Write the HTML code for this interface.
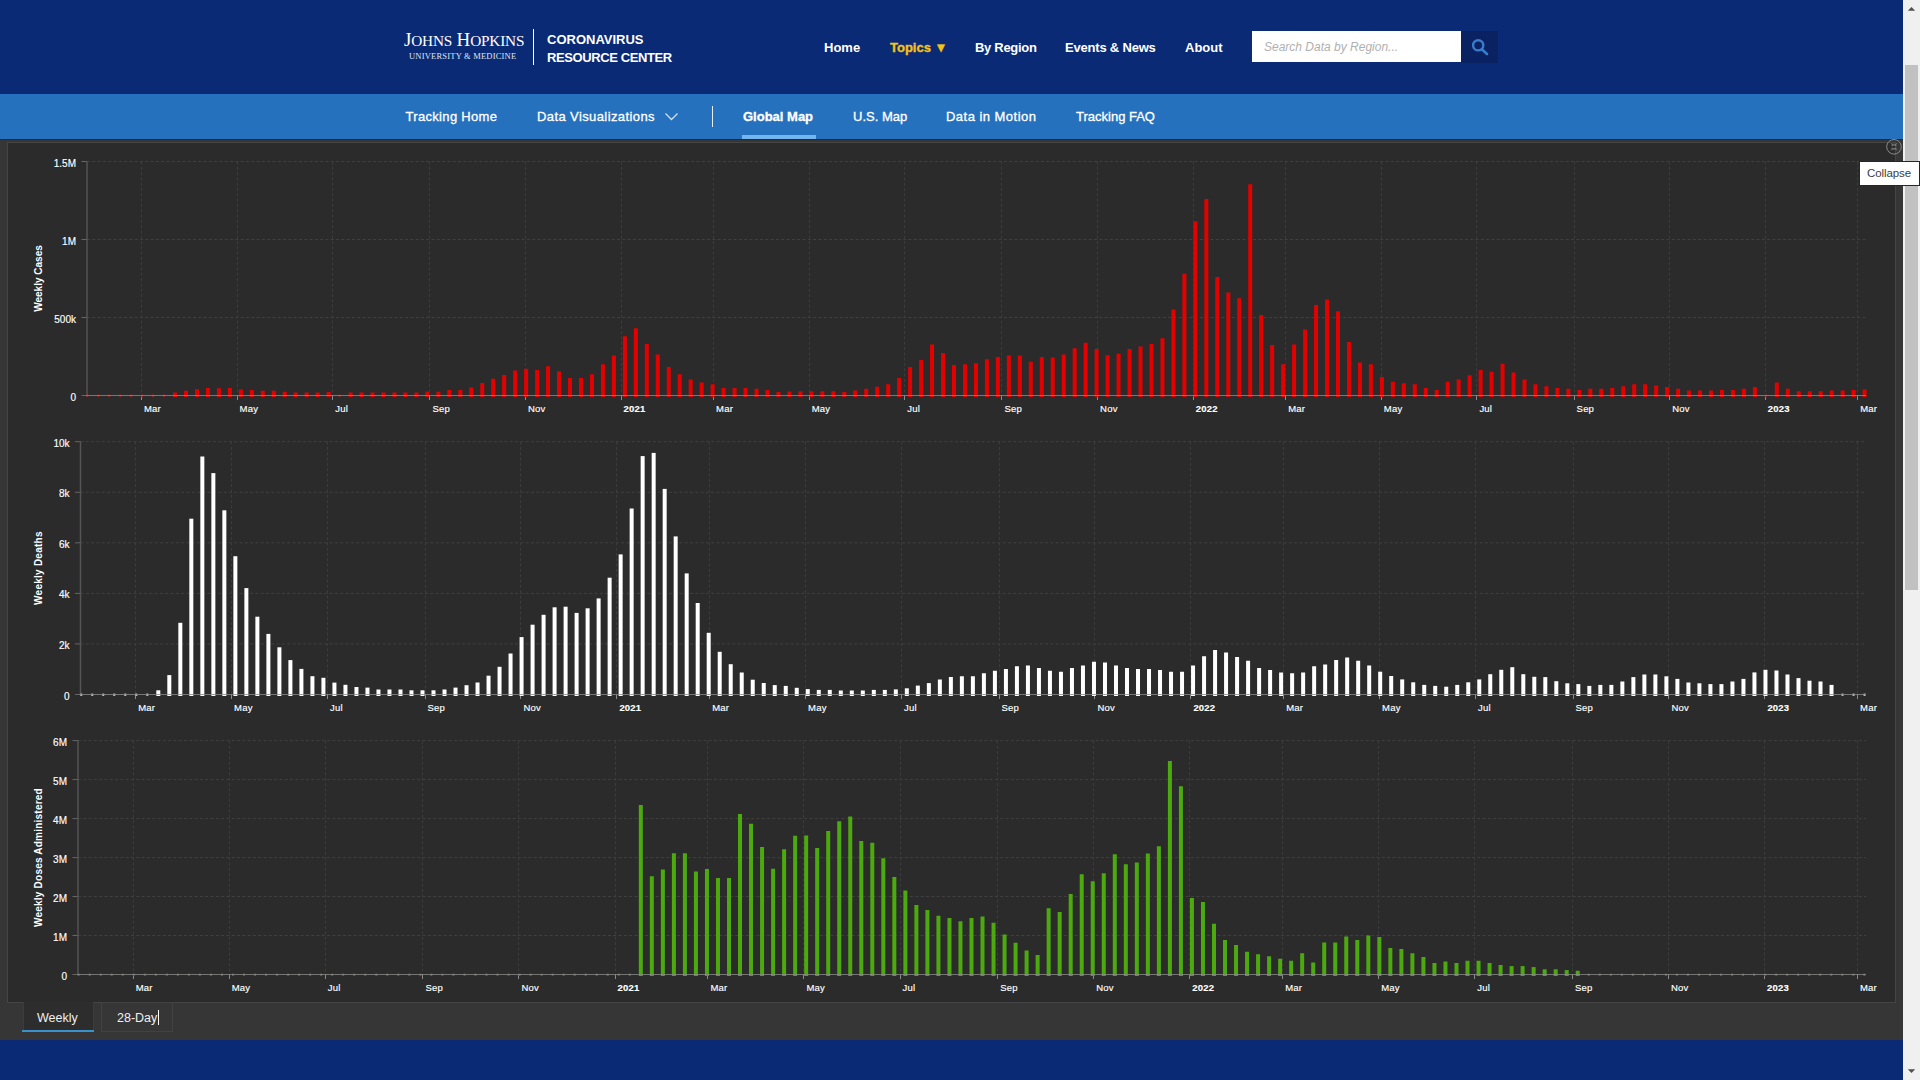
<!DOCTYPE html>
<html><head><meta charset="utf-8">
<style>
*{margin:0;padding:0;box-sizing:border-box}
html,body{width:1920px;height:1080px;overflow:hidden;background:#363636;font-family:"Liberation Sans", sans-serif}
.a{position:absolute;white-space:nowrap;line-height:1}
#hdr{position:absolute;left:0;top:0;width:1903px;height:94px;background:#0b2a75}
#sub{position:absolute;left:0;top:94px;width:1903px;height:45px;background:#2571bd}
#sub2{position:absolute;left:0;top:139px;width:1903px;height:1px;background:#1d2a40}
#outer{position:absolute;left:0;top:140px;width:1903px;height:900px;background:#363636}
#panel{position:absolute;left:7px;top:142px;width:1889px;height:861px;background:#2b2b2b;border:1px solid #454545}
#foot{position:absolute;left:0;top:1040px;width:1903px;height:40px;background:#0b2a75}
.nav{font-size:13px;color:#fff;font-weight:bold}
.snav{font-size:13px;color:#fff;-webkit-text-stroke:0.3px #fff}
svg text{font-family:"Liberation Sans", sans-serif}
.xl{font-size:9.5px;letter-spacing:0.2px;fill:#fff;stroke:#fff;stroke-width:0.15px}
.yl{font-size:10px;fill:#fff;stroke:#fff;stroke-width:0.15px}
.b{font-weight:bold}
.yt{font-size:10px;fill:#fff;font-weight:bold}
#sb{position:absolute;left:1903px;top:0;width:17px;height:1080px;background:#f0f0f0}
#thumb{position:absolute;left:1905px;top:65px;width:13px;height:525px;background:#c1c1c1}
</style></head><body>
<div id="hdr"></div>
<div id="sub"></div>
<div id="sub2"></div>
<div id="outer"></div>
<div id="panel"></div>
<div id="foot"></div>

<!-- logo -->
<div class="a" style="left:404px;top:30px;font-family:'Liberation Serif',serif;font-size:19px;color:#fff;letter-spacing:-0.2px">J<span style="font-size:15.3px">OHNS</span> H<span style="font-size:15.3px">OPKINS</span></div>
<div class="a" style="left:409px;top:52px;font-family:'Liberation Serif',serif;font-size:8.5px;color:#dfe6f2;letter-spacing:0.2px">UNIVERSITY &amp; MEDICINE</div>
<div class="a" style="left:533px;top:29px;width:1px;height:36px;background:#fff"></div>
<div class="a" style="left:547px;top:32.5px;font-size:13px;font-weight:bold;color:#fff;letter-spacing:0px">CORONAVIRUS</div>
<div class="a" style="left:547px;top:50.5px;font-size:13px;font-weight:bold;color:#fff;letter-spacing:-0.4px">RESOURCE CENTER</div>

<!-- nav -->
<div class="a nav" style="left:824px;top:40.5px">Home</div>
<div class="a nav" style="left:890px;top:40.5px;color:#f2c416;-webkit-text-stroke:0.35px #f2c416">Topics &#9660;</div>
<div class="a nav" style="left:975px;top:40.5px;letter-spacing:-0.3px">By Region</div>
<div class="a nav" style="left:1065px;top:40.5px;letter-spacing:-0.2px">Events &amp; News</div>
<div class="a nav" style="left:1185px;top:40.5px">About</div>

<div class="a" style="left:1252px;top:31px;width:209px;height:31px;background:#fff"></div>
<div class="a" style="left:1264px;top:40.5px;font-size:12px;font-style:italic;color:#b0b0b0">Search Data by Region...</div>
<div class="a" style="left:1461px;top:31px;width:37px;height:32px;background:#0a2262"></div>
<svg class="a" style="left:1461px;top:31px" width="37" height="32" viewBox="0 0 37 32"><circle cx="17.2" cy="14.3" r="5.1" fill="none" stroke="#3a7ccc" stroke-width="2.4"/><line x1="20.8" y1="18.2" x2="26" y2="23" stroke="#3a7ccc" stroke-width="2.6" stroke-linecap="round"/></svg>

<!-- subnav -->
<div class="a snav" style="left:405.5px;top:110px;letter-spacing:0.32px">Tracking Home</div>
<div class="a snav" style="left:537px;top:110px;letter-spacing:0.4px">Data Visualizations</div>
<svg class="a" style="left:664px;top:111px" width="15" height="10" viewBox="0 0 15 10"><polyline points="1.5,2.5 7.5,8.5 13.5,2.5" fill="none" stroke="#cfe0f5" stroke-width="1.3"/></svg>
<div class="a" style="left:711.5px;top:106px;width:1.3px;height:21px;background:#e8eef8"></div>
<div class="a snav" style="left:743px;top:110px;font-weight:bold">Global Map</div>
<div class="a" style="left:742px;top:135px;width:74px;height:4px;background:#72b6f0"></div>
<div class="a snav" style="left:853px;top:110px">U.S. Map</div>
<div class="a snav" style="left:946px;top:110px;letter-spacing:0.47px">Data in Motion</div>
<div class="a snav" style="left:1076px;top:110px">Tracking FAQ</div>

<svg class="a" style="left:0;top:0" width="1920" height="1080" viewBox="0 0 1920 1080">
<line x1="81.5" y1="395.5" x2="87" y2="395.5" stroke="#666"/>
<text x="76" y="400.5" text-anchor="end" class="yl">0</text>
<line x1="87" y1="317.5" x2="1866" y2="317.5" stroke="#404040" stroke-dasharray="3 2.3"/>
<line x1="81.5" y1="317.5" x2="87" y2="317.5" stroke="#666"/>
<text x="76" y="322.5" text-anchor="end" class="yl">500k</text>
<line x1="87" y1="239.5" x2="1866" y2="239.5" stroke="#404040" stroke-dasharray="3 2.3"/>
<line x1="81.5" y1="239.5" x2="87" y2="239.5" stroke="#666"/>
<text x="76" y="244.5" text-anchor="end" class="yl">1M</text>
<line x1="87" y1="161.5" x2="1866" y2="161.5" stroke="#404040" stroke-dasharray="3 2.3"/>
<line x1="81.5" y1="161.5" x2="87" y2="161.5" stroke="#666"/>
<text x="76" y="166.5" text-anchor="end" class="yl">1.5M</text>
<line x1="141.5" y1="161.5" x2="141.5" y2="395.5" stroke="#3c3c3c" stroke-dasharray="3 2.3"/>
<line x1="141.5" y1="395.5" x2="141.5" y2="400.0" stroke="#8a8a8a"/>
<text x="144.0" y="412.1" class="xl">Mar</text>
<line x1="237.5" y1="161.5" x2="237.5" y2="395.5" stroke="#3c3c3c" stroke-dasharray="3 2.3"/>
<line x1="237.5" y1="395.5" x2="237.5" y2="400.0" stroke="#8a8a8a"/>
<text x="239.6" y="412.1" class="xl">May</text>
<line x1="332.5" y1="161.5" x2="332.5" y2="395.5" stroke="#3c3c3c" stroke-dasharray="3 2.3"/>
<line x1="332.5" y1="395.5" x2="332.5" y2="400.0" stroke="#8a8a8a"/>
<text x="335.3" y="412.1" class="xl">Jul</text>
<line x1="429.5" y1="161.5" x2="429.5" y2="395.5" stroke="#3c3c3c" stroke-dasharray="3 2.3"/>
<line x1="429.5" y1="395.5" x2="429.5" y2="400.0" stroke="#8a8a8a"/>
<text x="432.4" y="412.1" class="xl">Sep</text>
<line x1="525.5" y1="161.5" x2="525.5" y2="395.5" stroke="#3c3c3c" stroke-dasharray="3 2.3"/>
<line x1="525.5" y1="395.5" x2="525.5" y2="400.0" stroke="#8a8a8a"/>
<text x="528.0" y="412.1" class="xl">Nov</text>
<line x1="621.5" y1="161.5" x2="621.5" y2="395.5" stroke="#3c3c3c" stroke-dasharray="3 2.3"/>
<line x1="621.5" y1="395.5" x2="621.5" y2="400.0" stroke="#8a8a8a"/>
<text x="623.6" y="412.1" class="xl b">2021</text>
<line x1="713.5" y1="161.5" x2="713.5" y2="395.5" stroke="#3c3c3c" stroke-dasharray="3 2.3"/>
<line x1="713.5" y1="395.5" x2="713.5" y2="400.0" stroke="#8a8a8a"/>
<text x="716.1" y="412.1" class="xl">Mar</text>
<line x1="809.5" y1="161.5" x2="809.5" y2="395.5" stroke="#3c3c3c" stroke-dasharray="3 2.3"/>
<line x1="809.5" y1="395.5" x2="809.5" y2="400.0" stroke="#8a8a8a"/>
<text x="811.7" y="412.1" class="xl">May</text>
<line x1="904.5" y1="161.5" x2="904.5" y2="395.5" stroke="#3c3c3c" stroke-dasharray="3 2.3"/>
<line x1="904.5" y1="395.5" x2="904.5" y2="400.0" stroke="#8a8a8a"/>
<text x="907.3" y="412.1" class="xl">Jul</text>
<line x1="1001.5" y1="161.5" x2="1001.5" y2="395.5" stroke="#3c3c3c" stroke-dasharray="3 2.3"/>
<line x1="1001.5" y1="395.5" x2="1001.5" y2="400.0" stroke="#8a8a8a"/>
<text x="1004.5" y="412.1" class="xl">Sep</text>
<line x1="1097.5" y1="161.5" x2="1097.5" y2="395.5" stroke="#3c3c3c" stroke-dasharray="3 2.3"/>
<line x1="1097.5" y1="395.5" x2="1097.5" y2="400.0" stroke="#8a8a8a"/>
<text x="1100.1" y="412.1" class="xl">Nov</text>
<line x1="1193.5" y1="161.5" x2="1193.5" y2="395.5" stroke="#3c3c3c" stroke-dasharray="3 2.3"/>
<line x1="1193.5" y1="395.5" x2="1193.5" y2="400.0" stroke="#8a8a8a"/>
<text x="1195.7" y="412.1" class="xl b">2022</text>
<line x1="1285.5" y1="161.5" x2="1285.5" y2="395.5" stroke="#3c3c3c" stroke-dasharray="3 2.3"/>
<line x1="1285.5" y1="395.5" x2="1285.5" y2="400.0" stroke="#8a8a8a"/>
<text x="1288.2" y="412.1" class="xl">Mar</text>
<line x1="1381.5" y1="161.5" x2="1381.5" y2="395.5" stroke="#3c3c3c" stroke-dasharray="3 2.3"/>
<line x1="1381.5" y1="395.5" x2="1381.5" y2="400.0" stroke="#8a8a8a"/>
<text x="1383.8" y="412.1" class="xl">May</text>
<line x1="1476.5" y1="161.5" x2="1476.5" y2="395.5" stroke="#3c3c3c" stroke-dasharray="3 2.3"/>
<line x1="1476.5" y1="395.5" x2="1476.5" y2="400.0" stroke="#8a8a8a"/>
<text x="1479.4" y="412.1" class="xl">Jul</text>
<line x1="1574.5" y1="161.5" x2="1574.5" y2="395.5" stroke="#3c3c3c" stroke-dasharray="3 2.3"/>
<line x1="1574.5" y1="395.5" x2="1574.5" y2="400.0" stroke="#8a8a8a"/>
<text x="1576.6" y="412.1" class="xl">Sep</text>
<line x1="1669.5" y1="161.5" x2="1669.5" y2="395.5" stroke="#3c3c3c" stroke-dasharray="3 2.3"/>
<line x1="1669.5" y1="395.5" x2="1669.5" y2="400.0" stroke="#8a8a8a"/>
<text x="1672.2" y="412.1" class="xl">Nov</text>
<line x1="1765.5" y1="161.5" x2="1765.5" y2="395.5" stroke="#3c3c3c" stroke-dasharray="3 2.3"/>
<line x1="1765.5" y1="395.5" x2="1765.5" y2="400.0" stroke="#8a8a8a"/>
<text x="1767.8" y="412.1" class="xl b">2023</text>
<line x1="1857.5" y1="161.5" x2="1857.5" y2="395.5" stroke="#3c3c3c" stroke-dasharray="3 2.3"/>
<line x1="1857.5" y1="395.5" x2="1857.5" y2="400.0" stroke="#8a8a8a"/>
<text x="1860.2" y="412.1" class="xl">Mar</text>
<line x1="87" y1="161.0" x2="87" y2="395.5" stroke="#555" stroke-width="1.5"/>
<rect x="86.28" y="394.5" width="2" height="2.5" fill="#a02020"/>
<rect x="97.26" y="394.5" width="2" height="2.5" fill="#a02020"/>
<rect x="108.23" y="394.5" width="2" height="2.5" fill="#a02020"/>
<rect x="119.20" y="394.5" width="2" height="2.5" fill="#a02020"/>
<rect x="130.17" y="394.5" width="2" height="2.5" fill="#a02020"/>
<rect x="141.14" y="394.5" width="2" height="2.5" fill="#a02020"/>
<rect x="152.11" y="394.5" width="2" height="2.5" fill="#a02020"/>
<rect x="163.08" y="394.5" width="2" height="2.5" fill="#a02020"/>
<rect x="173.05" y="392.50" width="4.0" height="4.50" fill="#e50000"/>
<rect x="184.02" y="390.75" width="4.0" height="6.25" fill="#e50000"/>
<rect x="195.00" y="389.25" width="4.0" height="7.75" fill="#e50000"/>
<rect x="205.97" y="388.00" width="4.0" height="9.00" fill="#e50000"/>
<rect x="216.94" y="388.25" width="4.0" height="8.75" fill="#e50000"/>
<rect x="227.91" y="388.00" width="4.0" height="9.00" fill="#e50000"/>
<rect x="238.88" y="389.50" width="4.0" height="7.50" fill="#e50000"/>
<rect x="249.85" y="390.00" width="4.0" height="7.00" fill="#e50000"/>
<rect x="260.82" y="390.75" width="4.0" height="6.25" fill="#e50000"/>
<rect x="271.79" y="390.75" width="4.0" height="6.25" fill="#e50000"/>
<rect x="282.77" y="391.75" width="4.0" height="5.25" fill="#e50000"/>
<rect x="293.74" y="392.50" width="4.0" height="4.50" fill="#e50000"/>
<rect x="304.71" y="392.50" width="4.0" height="4.50" fill="#e50000"/>
<rect x="315.68" y="392.50" width="4.0" height="4.50" fill="#e50000"/>
<rect x="326.65" y="392.00" width="4.0" height="5.00" fill="#e50000"/>
<rect x="338.62" y="394.5" width="2" height="2.5" fill="#a02020"/>
<rect x="348.59" y="392.50" width="4.0" height="4.50" fill="#e50000"/>
<rect x="359.56" y="392.50" width="4.0" height="4.50" fill="#e50000"/>
<rect x="370.53" y="392.50" width="4.0" height="4.50" fill="#e50000"/>
<rect x="381.51" y="392.50" width="4.0" height="4.50" fill="#e50000"/>
<rect x="392.48" y="392.50" width="4.0" height="4.50" fill="#e50000"/>
<rect x="403.45" y="392.50" width="4.0" height="4.50" fill="#e50000"/>
<rect x="414.42" y="392.50" width="4.0" height="4.50" fill="#e50000"/>
<rect x="425.39" y="391.50" width="4.0" height="5.50" fill="#e50000"/>
<rect x="436.36" y="391.75" width="4.0" height="5.25" fill="#e50000"/>
<rect x="447.33" y="390.00" width="4.0" height="7.00" fill="#e50000"/>
<rect x="458.30" y="390.00" width="4.0" height="7.00" fill="#e50000"/>
<rect x="469.28" y="387.50" width="4.0" height="9.50" fill="#e50000"/>
<rect x="480.25" y="383.00" width="4.0" height="14.00" fill="#e50000"/>
<rect x="491.22" y="378.75" width="4.0" height="18.25" fill="#e50000"/>
<rect x="502.19" y="375.00" width="4.0" height="22.00" fill="#e50000"/>
<rect x="513.16" y="370.50" width="4.0" height="26.50" fill="#e50000"/>
<rect x="524.13" y="368.75" width="4.0" height="28.25" fill="#e50000"/>
<rect x="535.10" y="370.00" width="4.0" height="27.00" fill="#e50000"/>
<rect x="546.07" y="366.25" width="4.0" height="30.75" fill="#e50000"/>
<rect x="557.04" y="371.25" width="4.0" height="25.75" fill="#e50000"/>
<rect x="568.02" y="378.00" width="4.0" height="19.00" fill="#e50000"/>
<rect x="578.99" y="378.00" width="4.0" height="19.00" fill="#e50000"/>
<rect x="589.96" y="374.25" width="4.0" height="22.75" fill="#e50000"/>
<rect x="600.93" y="364.25" width="4.0" height="32.75" fill="#e50000"/>
<rect x="611.90" y="355.50" width="4.0" height="41.50" fill="#e50000"/>
<rect x="622.87" y="336.25" width="4.0" height="60.75" fill="#e50000"/>
<rect x="633.84" y="328.25" width="4.0" height="68.75" fill="#e50000"/>
<rect x="644.81" y="344.00" width="4.0" height="53.00" fill="#e50000"/>
<rect x="655.78" y="354.50" width="4.0" height="42.50" fill="#e50000"/>
<rect x="666.76" y="367.00" width="4.0" height="30.00" fill="#e50000"/>
<rect x="677.73" y="374.25" width="4.0" height="22.75" fill="#e50000"/>
<rect x="688.70" y="379.50" width="4.0" height="17.50" fill="#e50000"/>
<rect x="699.67" y="382.50" width="4.0" height="14.50" fill="#e50000"/>
<rect x="710.64" y="384.25" width="4.0" height="12.75" fill="#e50000"/>
<rect x="721.61" y="388.00" width="4.0" height="9.00" fill="#e50000"/>
<rect x="732.58" y="388.00" width="4.0" height="9.00" fill="#e50000"/>
<rect x="743.55" y="388.00" width="4.0" height="9.00" fill="#e50000"/>
<rect x="754.53" y="388.75" width="4.0" height="8.25" fill="#e50000"/>
<rect x="765.50" y="390.00" width="4.0" height="7.00" fill="#e50000"/>
<rect x="776.47" y="392.00" width="4.0" height="5.00" fill="#e50000"/>
<rect x="787.44" y="391.50" width="4.0" height="5.50" fill="#e50000"/>
<rect x="798.41" y="391.25" width="4.0" height="5.75" fill="#e50000"/>
<rect x="809.38" y="391.25" width="4.0" height="5.75" fill="#e50000"/>
<rect x="820.35" y="391.25" width="4.0" height="5.75" fill="#e50000"/>
<rect x="831.32" y="391.25" width="4.0" height="5.75" fill="#e50000"/>
<rect x="842.29" y="392.00" width="4.0" height="5.00" fill="#e50000"/>
<rect x="853.27" y="390.50" width="4.0" height="6.50" fill="#e50000"/>
<rect x="864.24" y="388.75" width="4.0" height="8.25" fill="#e50000"/>
<rect x="875.21" y="386.75" width="4.0" height="10.25" fill="#e50000"/>
<rect x="886.18" y="384.25" width="4.0" height="12.75" fill="#e50000"/>
<rect x="897.15" y="378.00" width="4.0" height="19.00" fill="#e50000"/>
<rect x="908.12" y="367.00" width="4.0" height="30.00" fill="#e50000"/>
<rect x="919.09" y="360.00" width="4.0" height="37.00" fill="#e50000"/>
<rect x="930.06" y="344.50" width="4.0" height="52.50" fill="#e50000"/>
<rect x="941.04" y="353.00" width="4.0" height="44.00" fill="#e50000"/>
<rect x="952.01" y="365.00" width="4.0" height="32.00" fill="#e50000"/>
<rect x="962.98" y="364.25" width="4.0" height="32.75" fill="#e50000"/>
<rect x="973.95" y="363.25" width="4.0" height="33.75" fill="#e50000"/>
<rect x="984.92" y="359.25" width="4.0" height="37.75" fill="#e50000"/>
<rect x="995.89" y="357.00" width="4.0" height="40.00" fill="#e50000"/>
<rect x="1006.86" y="355.50" width="4.0" height="41.50" fill="#e50000"/>
<rect x="1017.83" y="355.50" width="4.0" height="41.50" fill="#e50000"/>
<rect x="1028.80" y="361.75" width="4.0" height="35.25" fill="#e50000"/>
<rect x="1039.78" y="357.00" width="4.0" height="40.00" fill="#e50000"/>
<rect x="1050.75" y="357.50" width="4.0" height="39.50" fill="#e50000"/>
<rect x="1061.72" y="354.50" width="4.0" height="42.50" fill="#e50000"/>
<rect x="1072.69" y="348.25" width="4.0" height="48.75" fill="#e50000"/>
<rect x="1083.66" y="342.75" width="4.0" height="54.25" fill="#e50000"/>
<rect x="1094.63" y="349.00" width="4.0" height="48.00" fill="#e50000"/>
<rect x="1105.60" y="355.25" width="4.0" height="41.75" fill="#e50000"/>
<rect x="1116.57" y="353.75" width="4.0" height="43.25" fill="#e50000"/>
<rect x="1127.55" y="349.00" width="4.0" height="48.00" fill="#e50000"/>
<rect x="1138.52" y="346.50" width="4.0" height="50.50" fill="#e50000"/>
<rect x="1149.49" y="344.00" width="4.0" height="53.00" fill="#e50000"/>
<rect x="1160.46" y="338.25" width="4.0" height="58.75" fill="#e50000"/>
<rect x="1171.43" y="309.50" width="4.0" height="87.50" fill="#e50000"/>
<rect x="1182.40" y="273.75" width="4.0" height="123.25" fill="#e50000"/>
<rect x="1193.37" y="221.25" width="4.0" height="175.75" fill="#e50000"/>
<rect x="1204.34" y="199.00" width="4.0" height="198.00" fill="#e50000"/>
<rect x="1215.31" y="277.00" width="4.0" height="120.00" fill="#e50000"/>
<rect x="1226.29" y="292.50" width="4.0" height="104.50" fill="#e50000"/>
<rect x="1237.26" y="298.25" width="4.0" height="98.75" fill="#e50000"/>
<rect x="1248.23" y="184.25" width="4.0" height="212.75" fill="#e50000"/>
<rect x="1259.20" y="315.00" width="4.0" height="82.00" fill="#e50000"/>
<rect x="1270.17" y="345.00" width="4.0" height="52.00" fill="#e50000"/>
<rect x="1281.14" y="364.25" width="4.0" height="32.75" fill="#e50000"/>
<rect x="1292.11" y="344.50" width="4.0" height="52.50" fill="#e50000"/>
<rect x="1303.08" y="329.50" width="4.0" height="67.50" fill="#e50000"/>
<rect x="1314.06" y="305.00" width="4.0" height="92.00" fill="#e50000"/>
<rect x="1325.03" y="299.50" width="4.0" height="97.50" fill="#e50000"/>
<rect x="1336.00" y="311.25" width="4.0" height="85.75" fill="#e50000"/>
<rect x="1346.97" y="342.00" width="4.0" height="55.00" fill="#e50000"/>
<rect x="1357.94" y="362.50" width="4.0" height="34.50" fill="#e50000"/>
<rect x="1368.91" y="364.25" width="4.0" height="32.75" fill="#e50000"/>
<rect x="1379.88" y="377.00" width="4.0" height="20.00" fill="#e50000"/>
<rect x="1390.85" y="381.75" width="4.0" height="15.25" fill="#e50000"/>
<rect x="1401.82" y="383.25" width="4.0" height="13.75" fill="#e50000"/>
<rect x="1412.80" y="384.25" width="4.0" height="12.75" fill="#e50000"/>
<rect x="1423.77" y="388.00" width="4.0" height="9.00" fill="#e50000"/>
<rect x="1434.74" y="390.00" width="4.0" height="7.00" fill="#e50000"/>
<rect x="1445.71" y="381.75" width="4.0" height="15.25" fill="#e50000"/>
<rect x="1456.68" y="379.50" width="4.0" height="17.50" fill="#e50000"/>
<rect x="1467.65" y="375.25" width="4.0" height="21.75" fill="#e50000"/>
<rect x="1478.62" y="370.00" width="4.0" height="27.00" fill="#e50000"/>
<rect x="1489.59" y="371.75" width="4.0" height="25.25" fill="#e50000"/>
<rect x="1500.57" y="363.75" width="4.0" height="33.25" fill="#e50000"/>
<rect x="1511.54" y="372.50" width="4.0" height="24.50" fill="#e50000"/>
<rect x="1522.51" y="379.50" width="4.0" height="17.50" fill="#e50000"/>
<rect x="1533.48" y="384.25" width="4.0" height="12.75" fill="#e50000"/>
<rect x="1544.45" y="386.25" width="4.0" height="10.75" fill="#e50000"/>
<rect x="1555.42" y="388.00" width="4.0" height="9.00" fill="#e50000"/>
<rect x="1566.39" y="388.75" width="4.0" height="8.25" fill="#e50000"/>
<rect x="1577.36" y="390.00" width="4.0" height="7.00" fill="#e50000"/>
<rect x="1588.33" y="388.75" width="4.0" height="8.25" fill="#e50000"/>
<rect x="1599.31" y="388.75" width="4.0" height="8.25" fill="#e50000"/>
<rect x="1610.28" y="388.00" width="4.0" height="9.00" fill="#e50000"/>
<rect x="1621.25" y="386.25" width="4.0" height="10.75" fill="#e50000"/>
<rect x="1632.22" y="384.25" width="4.0" height="12.75" fill="#e50000"/>
<rect x="1643.19" y="384.25" width="4.0" height="12.75" fill="#e50000"/>
<rect x="1654.16" y="385.50" width="4.0" height="11.50" fill="#e50000"/>
<rect x="1665.13" y="387.00" width="4.0" height="10.00" fill="#e50000"/>
<rect x="1676.10" y="388.75" width="4.0" height="8.25" fill="#e50000"/>
<rect x="1687.07" y="390.50" width="4.0" height="6.50" fill="#e50000"/>
<rect x="1698.05" y="390.50" width="4.0" height="6.50" fill="#e50000"/>
<rect x="1709.02" y="390.50" width="4.0" height="6.50" fill="#e50000"/>
<rect x="1719.99" y="390.00" width="4.0" height="7.00" fill="#e50000"/>
<rect x="1730.96" y="390.00" width="4.0" height="7.00" fill="#e50000"/>
<rect x="1741.93" y="388.75" width="4.0" height="8.25" fill="#e50000"/>
<rect x="1752.90" y="387.00" width="4.0" height="10.00" fill="#e50000"/>
<rect x="1764.87" y="394.5" width="2" height="2.5" fill="#a02020"/>
<rect x="1774.84" y="382.50" width="4.0" height="14.50" fill="#e50000"/>
<rect x="1785.82" y="388.75" width="4.0" height="8.25" fill="#e50000"/>
<rect x="1796.79" y="391.25" width="4.0" height="5.75" fill="#e50000"/>
<rect x="1807.76" y="391.25" width="4.0" height="5.75" fill="#e50000"/>
<rect x="1818.73" y="391.25" width="4.0" height="5.75" fill="#e50000"/>
<rect x="1829.70" y="390.50" width="4.0" height="6.50" fill="#e50000"/>
<rect x="1840.67" y="390.50" width="4.0" height="6.50" fill="#e50000"/>
<rect x="1851.64" y="390.00" width="4.0" height="7.00" fill="#e50000"/>
<rect x="1862.61" y="389.50" width="4.0" height="7.50" fill="#e50000"/>
<line x1="86" y1="395.5" x2="1866" y2="395.5" stroke="#8a8a8a" stroke-opacity="0.8"/>
<text transform="translate(42,278.5) rotate(-90)" text-anchor="middle" class="yt">Weekly Cases</text>
<line x1="75.0" y1="694.5" x2="80.5" y2="694.5" stroke="#666"/>
<text x="69.5" y="699.5" text-anchor="end" class="yl">0</text>
<line x1="80.5" y1="643.9" x2="1866" y2="643.9" stroke="#404040" stroke-dasharray="3 2.3"/>
<line x1="75.0" y1="643.9" x2="80.5" y2="643.9" stroke="#666"/>
<text x="69.5" y="648.9" text-anchor="end" class="yl">2k</text>
<line x1="80.5" y1="593.4" x2="1866" y2="593.4" stroke="#404040" stroke-dasharray="3 2.3"/>
<line x1="75.0" y1="593.4" x2="80.5" y2="593.4" stroke="#666"/>
<text x="69.5" y="598.4" text-anchor="end" class="yl">4k</text>
<line x1="80.5" y1="542.8" x2="1866" y2="542.8" stroke="#404040" stroke-dasharray="3 2.3"/>
<line x1="75.0" y1="542.8" x2="80.5" y2="542.8" stroke="#666"/>
<text x="69.5" y="547.8" text-anchor="end" class="yl">6k</text>
<line x1="80.5" y1="492.3" x2="1866" y2="492.3" stroke="#404040" stroke-dasharray="3 2.3"/>
<line x1="75.0" y1="492.3" x2="80.5" y2="492.3" stroke="#666"/>
<text x="69.5" y="497.3" text-anchor="end" class="yl">8k</text>
<line x1="80.5" y1="441.7" x2="1866" y2="441.7" stroke="#404040" stroke-dasharray="3 2.3"/>
<line x1="75.0" y1="441.7" x2="80.5" y2="441.7" stroke="#666"/>
<text x="69.5" y="446.7" text-anchor="end" class="yl">10k</text>
<line x1="135.5" y1="441.7" x2="135.5" y2="694.5" stroke="#3c3c3c" stroke-dasharray="3 2.3"/>
<line x1="135.5" y1="694.5" x2="135.5" y2="699.0" stroke="#8a8a8a"/>
<text x="138.2" y="711.1" class="xl">Mar</text>
<line x1="231.5" y1="441.7" x2="231.5" y2="694.5" stroke="#3c3c3c" stroke-dasharray="3 2.3"/>
<line x1="231.5" y1="694.5" x2="231.5" y2="699.0" stroke="#8a8a8a"/>
<text x="234.1" y="711.1" class="xl">May</text>
<line x1="327.5" y1="441.7" x2="327.5" y2="694.5" stroke="#3c3c3c" stroke-dasharray="3 2.3"/>
<line x1="327.5" y1="694.5" x2="327.5" y2="699.0" stroke="#8a8a8a"/>
<text x="330.0" y="711.1" class="xl">Jul</text>
<line x1="425.5" y1="441.7" x2="425.5" y2="694.5" stroke="#3c3c3c" stroke-dasharray="3 2.3"/>
<line x1="425.5" y1="694.5" x2="425.5" y2="699.0" stroke="#8a8a8a"/>
<text x="427.5" y="711.1" class="xl">Sep</text>
<line x1="520.5" y1="441.7" x2="520.5" y2="694.5" stroke="#3c3c3c" stroke-dasharray="3 2.3"/>
<line x1="520.5" y1="694.5" x2="520.5" y2="699.0" stroke="#8a8a8a"/>
<text x="523.5" y="711.1" class="xl">Nov</text>
<line x1="616.5" y1="441.7" x2="616.5" y2="694.5" stroke="#3c3c3c" stroke-dasharray="3 2.3"/>
<line x1="616.5" y1="694.5" x2="616.5" y2="699.0" stroke="#8a8a8a"/>
<text x="619.4" y="711.1" class="xl b">2021</text>
<line x1="709.5" y1="441.7" x2="709.5" y2="694.5" stroke="#3c3c3c" stroke-dasharray="3 2.3"/>
<line x1="709.5" y1="694.5" x2="709.5" y2="699.0" stroke="#8a8a8a"/>
<text x="712.2" y="711.1" class="xl">Mar</text>
<line x1="805.5" y1="441.7" x2="805.5" y2="694.5" stroke="#3c3c3c" stroke-dasharray="3 2.3"/>
<line x1="805.5" y1="694.5" x2="805.5" y2="699.0" stroke="#8a8a8a"/>
<text x="808.1" y="711.1" class="xl">May</text>
<line x1="901.5" y1="441.7" x2="901.5" y2="694.5" stroke="#3c3c3c" stroke-dasharray="3 2.3"/>
<line x1="901.5" y1="694.5" x2="901.5" y2="699.0" stroke="#8a8a8a"/>
<text x="904.0" y="711.1" class="xl">Jul</text>
<line x1="999.5" y1="441.7" x2="999.5" y2="694.5" stroke="#3c3c3c" stroke-dasharray="3 2.3"/>
<line x1="999.5" y1="694.5" x2="999.5" y2="699.0" stroke="#8a8a8a"/>
<text x="1001.5" y="711.1" class="xl">Sep</text>
<line x1="1094.5" y1="441.7" x2="1094.5" y2="694.5" stroke="#3c3c3c" stroke-dasharray="3 2.3"/>
<line x1="1094.5" y1="694.5" x2="1094.5" y2="699.0" stroke="#8a8a8a"/>
<text x="1097.5" y="711.1" class="xl">Nov</text>
<line x1="1190.5" y1="441.7" x2="1190.5" y2="694.5" stroke="#3c3c3c" stroke-dasharray="3 2.3"/>
<line x1="1190.5" y1="694.5" x2="1190.5" y2="699.0" stroke="#8a8a8a"/>
<text x="1193.4" y="711.1" class="xl b">2022</text>
<line x1="1283.5" y1="441.7" x2="1283.5" y2="694.5" stroke="#3c3c3c" stroke-dasharray="3 2.3"/>
<line x1="1283.5" y1="694.5" x2="1283.5" y2="699.0" stroke="#8a8a8a"/>
<text x="1286.2" y="711.1" class="xl">Mar</text>
<line x1="1379.5" y1="441.7" x2="1379.5" y2="694.5" stroke="#3c3c3c" stroke-dasharray="3 2.3"/>
<line x1="1379.5" y1="694.5" x2="1379.5" y2="699.0" stroke="#8a8a8a"/>
<text x="1382.1" y="711.1" class="xl">May</text>
<line x1="1475.5" y1="441.7" x2="1475.5" y2="694.5" stroke="#3c3c3c" stroke-dasharray="3 2.3"/>
<line x1="1475.5" y1="694.5" x2="1475.5" y2="699.0" stroke="#8a8a8a"/>
<text x="1478.0" y="711.1" class="xl">Jul</text>
<line x1="1573.5" y1="441.7" x2="1573.5" y2="694.5" stroke="#3c3c3c" stroke-dasharray="3 2.3"/>
<line x1="1573.5" y1="694.5" x2="1573.5" y2="699.0" stroke="#8a8a8a"/>
<text x="1575.5" y="711.1" class="xl">Sep</text>
<line x1="1668.5" y1="441.7" x2="1668.5" y2="694.5" stroke="#3c3c3c" stroke-dasharray="3 2.3"/>
<line x1="1668.5" y1="694.5" x2="1668.5" y2="699.0" stroke="#8a8a8a"/>
<text x="1671.4" y="711.1" class="xl">Nov</text>
<line x1="1764.5" y1="441.7" x2="1764.5" y2="694.5" stroke="#3c3c3c" stroke-dasharray="3 2.3"/>
<line x1="1764.5" y1="694.5" x2="1764.5" y2="699.0" stroke="#8a8a8a"/>
<text x="1767.4" y="711.1" class="xl b">2023</text>
<line x1="1857.5" y1="441.7" x2="1857.5" y2="694.5" stroke="#3c3c3c" stroke-dasharray="3 2.3"/>
<line x1="1857.5" y1="694.5" x2="1857.5" y2="699.0" stroke="#8a8a8a"/>
<text x="1860.1" y="711.1" class="xl">Mar</text>
<line x1="80.5" y1="441.2" x2="80.5" y2="694.5" stroke="#555" stroke-width="1.5"/>
<rect x="80.25" y="693.5" width="2" height="2.5" fill="#bbbbbb"/>
<rect x="91.26" y="693.5" width="2" height="2.5" fill="#bbbbbb"/>
<rect x="102.27" y="693.5" width="2" height="2.5" fill="#bbbbbb"/>
<rect x="113.27" y="693.5" width="2" height="2.5" fill="#bbbbbb"/>
<rect x="124.28" y="693.5" width="2" height="2.5" fill="#bbbbbb"/>
<rect x="135.29" y="693.5" width="2" height="2.5" fill="#bbbbbb"/>
<rect x="146.30" y="693.5" width="2" height="2.5" fill="#bbbbbb"/>
<rect x="156.31" y="690.30" width="4.0" height="5.70" fill="#ffffff"/>
<rect x="167.31" y="675.10" width="4.0" height="20.90" fill="#ffffff"/>
<rect x="178.32" y="622.80" width="4.0" height="73.20" fill="#ffffff"/>
<rect x="189.33" y="518.70" width="4.0" height="177.30" fill="#ffffff"/>
<rect x="200.34" y="456.50" width="4.0" height="239.50" fill="#ffffff"/>
<rect x="211.35" y="473.10" width="4.0" height="222.90" fill="#ffffff"/>
<rect x="222.35" y="510.30" width="4.0" height="185.70" fill="#ffffff"/>
<rect x="233.36" y="556.20" width="4.0" height="139.80" fill="#ffffff"/>
<rect x="244.37" y="588.10" width="4.0" height="107.90" fill="#ffffff"/>
<rect x="255.38" y="616.70" width="4.0" height="79.30" fill="#ffffff"/>
<rect x="266.39" y="633.90" width="4.0" height="62.10" fill="#ffffff"/>
<rect x="277.39" y="647.30" width="4.0" height="48.70" fill="#ffffff"/>
<rect x="288.40" y="660.10" width="4.0" height="35.90" fill="#ffffff"/>
<rect x="299.41" y="668.90" width="4.0" height="27.10" fill="#ffffff"/>
<rect x="310.42" y="676.20" width="4.0" height="19.80" fill="#ffffff"/>
<rect x="321.42" y="677.80" width="4.0" height="18.20" fill="#ffffff"/>
<rect x="332.43" y="682.60" width="4.0" height="13.40" fill="#ffffff"/>
<rect x="343.44" y="684.80" width="4.0" height="11.20" fill="#ffffff"/>
<rect x="354.45" y="687.00" width="4.0" height="9.00" fill="#ffffff"/>
<rect x="365.46" y="687.60" width="4.0" height="8.40" fill="#ffffff"/>
<rect x="376.46" y="689.50" width="4.0" height="6.50" fill="#ffffff"/>
<rect x="387.47" y="689.50" width="4.0" height="6.50" fill="#ffffff"/>
<rect x="398.48" y="689.50" width="4.0" height="6.50" fill="#ffffff"/>
<rect x="409.49" y="690.30" width="4.0" height="5.70" fill="#ffffff"/>
<rect x="420.50" y="690.30" width="4.0" height="5.70" fill="#ffffff"/>
<rect x="431.50" y="690.30" width="4.0" height="5.70" fill="#ffffff"/>
<rect x="442.51" y="689.50" width="4.0" height="6.50" fill="#ffffff"/>
<rect x="453.52" y="687.60" width="4.0" height="8.40" fill="#ffffff"/>
<rect x="464.53" y="685.20" width="4.0" height="10.80" fill="#ffffff"/>
<rect x="475.54" y="682.50" width="4.0" height="13.50" fill="#ffffff"/>
<rect x="486.54" y="675.70" width="4.0" height="20.30" fill="#ffffff"/>
<rect x="497.55" y="666.80" width="4.0" height="29.20" fill="#ffffff"/>
<rect x="508.56" y="653.50" width="4.0" height="42.50" fill="#ffffff"/>
<rect x="519.57" y="637.10" width="4.0" height="58.90" fill="#ffffff"/>
<rect x="530.58" y="624.70" width="4.0" height="71.30" fill="#ffffff"/>
<rect x="541.58" y="614.80" width="4.0" height="81.20" fill="#ffffff"/>
<rect x="552.59" y="607.30" width="4.0" height="88.70" fill="#ffffff"/>
<rect x="563.60" y="606.70" width="4.0" height="89.30" fill="#ffffff"/>
<rect x="574.61" y="612.90" width="4.0" height="83.10" fill="#ffffff"/>
<rect x="585.61" y="608.30" width="4.0" height="87.70" fill="#ffffff"/>
<rect x="596.62" y="598.40" width="4.0" height="97.60" fill="#ffffff"/>
<rect x="607.63" y="577.70" width="4.0" height="118.30" fill="#ffffff"/>
<rect x="618.64" y="554.40" width="4.0" height="141.60" fill="#ffffff"/>
<rect x="629.65" y="508.50" width="4.0" height="187.50" fill="#ffffff"/>
<rect x="640.65" y="456.10" width="4.0" height="239.90" fill="#ffffff"/>
<rect x="651.66" y="452.90" width="4.0" height="243.10" fill="#ffffff"/>
<rect x="662.67" y="488.90" width="4.0" height="207.10" fill="#ffffff"/>
<rect x="673.68" y="536.40" width="4.0" height="159.60" fill="#ffffff"/>
<rect x="684.69" y="573.40" width="4.0" height="122.60" fill="#ffffff"/>
<rect x="695.69" y="603.00" width="4.0" height="93.00" fill="#ffffff"/>
<rect x="706.70" y="632.80" width="4.0" height="63.20" fill="#ffffff"/>
<rect x="717.71" y="651.80" width="4.0" height="44.20" fill="#ffffff"/>
<rect x="728.72" y="664.20" width="4.0" height="31.80" fill="#ffffff"/>
<rect x="739.73" y="672.50" width="4.0" height="23.50" fill="#ffffff"/>
<rect x="750.73" y="679.70" width="4.0" height="16.30" fill="#ffffff"/>
<rect x="761.74" y="683.00" width="4.0" height="13.00" fill="#ffffff"/>
<rect x="772.75" y="685.10" width="4.0" height="10.90" fill="#ffffff"/>
<rect x="783.76" y="685.90" width="4.0" height="10.10" fill="#ffffff"/>
<rect x="794.77" y="687.80" width="4.0" height="8.20" fill="#ffffff"/>
<rect x="805.77" y="689.10" width="4.0" height="6.90" fill="#ffffff"/>
<rect x="816.78" y="689.90" width="4.0" height="6.10" fill="#ffffff"/>
<rect x="827.79" y="689.90" width="4.0" height="6.10" fill="#ffffff"/>
<rect x="838.80" y="690.50" width="4.0" height="5.50" fill="#ffffff"/>
<rect x="849.80" y="690.50" width="4.0" height="5.50" fill="#ffffff"/>
<rect x="860.81" y="690.50" width="4.0" height="5.50" fill="#ffffff"/>
<rect x="871.82" y="689.90" width="4.0" height="6.10" fill="#ffffff"/>
<rect x="882.83" y="689.90" width="4.0" height="6.10" fill="#ffffff"/>
<rect x="893.84" y="689.40" width="4.0" height="6.60" fill="#ffffff"/>
<rect x="904.84" y="688.30" width="4.0" height="7.70" fill="#ffffff"/>
<rect x="915.85" y="685.60" width="4.0" height="10.40" fill="#ffffff"/>
<rect x="926.86" y="683.10" width="4.0" height="12.90" fill="#ffffff"/>
<rect x="937.87" y="679.50" width="4.0" height="16.50" fill="#ffffff"/>
<rect x="948.88" y="677.00" width="4.0" height="19.00" fill="#ffffff"/>
<rect x="959.88" y="676.25" width="4.0" height="19.75" fill="#ffffff"/>
<rect x="970.89" y="676.25" width="4.0" height="19.75" fill="#ffffff"/>
<rect x="981.90" y="673.25" width="4.0" height="22.75" fill="#ffffff"/>
<rect x="992.91" y="670.75" width="4.0" height="25.25" fill="#ffffff"/>
<rect x="1003.92" y="669.00" width="4.0" height="27.00" fill="#ffffff"/>
<rect x="1014.92" y="666.25" width="4.0" height="29.75" fill="#ffffff"/>
<rect x="1025.93" y="665.50" width="4.0" height="30.50" fill="#ffffff"/>
<rect x="1036.94" y="668.00" width="4.0" height="28.00" fill="#ffffff"/>
<rect x="1047.95" y="670.75" width="4.0" height="25.25" fill="#ffffff"/>
<rect x="1058.96" y="671.75" width="4.0" height="24.25" fill="#ffffff"/>
<rect x="1069.96" y="668.00" width="4.0" height="28.00" fill="#ffffff"/>
<rect x="1080.97" y="665.50" width="4.0" height="30.50" fill="#ffffff"/>
<rect x="1091.98" y="661.75" width="4.0" height="34.25" fill="#ffffff"/>
<rect x="1102.99" y="662.50" width="4.0" height="33.50" fill="#ffffff"/>
<rect x="1113.99" y="665.50" width="4.0" height="30.50" fill="#ffffff"/>
<rect x="1125.00" y="668.00" width="4.0" height="28.00" fill="#ffffff"/>
<rect x="1136.01" y="669.00" width="4.0" height="27.00" fill="#ffffff"/>
<rect x="1147.02" y="669.00" width="4.0" height="27.00" fill="#ffffff"/>
<rect x="1158.03" y="670.00" width="4.0" height="26.00" fill="#ffffff"/>
<rect x="1169.03" y="671.75" width="4.0" height="24.25" fill="#ffffff"/>
<rect x="1180.04" y="671.75" width="4.0" height="24.25" fill="#ffffff"/>
<rect x="1191.05" y="665.50" width="4.0" height="30.50" fill="#ffffff"/>
<rect x="1202.06" y="656.25" width="4.0" height="39.75" fill="#ffffff"/>
<rect x="1213.07" y="650.00" width="4.0" height="46.00" fill="#ffffff"/>
<rect x="1224.07" y="652.50" width="4.0" height="43.50" fill="#ffffff"/>
<rect x="1235.08" y="657.00" width="4.0" height="39.00" fill="#ffffff"/>
<rect x="1246.09" y="660.75" width="4.0" height="35.25" fill="#ffffff"/>
<rect x="1257.10" y="668.00" width="4.0" height="28.00" fill="#ffffff"/>
<rect x="1268.11" y="670.00" width="4.0" height="26.00" fill="#ffffff"/>
<rect x="1279.11" y="672.50" width="4.0" height="23.50" fill="#ffffff"/>
<rect x="1290.12" y="673.25" width="4.0" height="22.75" fill="#ffffff"/>
<rect x="1301.13" y="672.50" width="4.0" height="23.50" fill="#ffffff"/>
<rect x="1312.14" y="666.25" width="4.0" height="29.75" fill="#ffffff"/>
<rect x="1323.15" y="664.50" width="4.0" height="31.50" fill="#ffffff"/>
<rect x="1334.15" y="660.00" width="4.0" height="36.00" fill="#ffffff"/>
<rect x="1345.16" y="657.50" width="4.0" height="38.50" fill="#ffffff"/>
<rect x="1356.17" y="660.75" width="4.0" height="35.25" fill="#ffffff"/>
<rect x="1367.18" y="665.50" width="4.0" height="30.50" fill="#ffffff"/>
<rect x="1378.18" y="671.70" width="4.0" height="24.30" fill="#ffffff"/>
<rect x="1389.19" y="676.00" width="4.0" height="20.00" fill="#ffffff"/>
<rect x="1400.20" y="679.40" width="4.0" height="16.60" fill="#ffffff"/>
<rect x="1411.21" y="682.30" width="4.0" height="13.70" fill="#ffffff"/>
<rect x="1422.22" y="684.90" width="4.0" height="11.10" fill="#ffffff"/>
<rect x="1433.22" y="685.90" width="4.0" height="10.10" fill="#ffffff"/>
<rect x="1444.23" y="686.70" width="4.0" height="9.30" fill="#ffffff"/>
<rect x="1455.24" y="684.90" width="4.0" height="11.10" fill="#ffffff"/>
<rect x="1466.25" y="682.30" width="4.0" height="13.70" fill="#ffffff"/>
<rect x="1477.26" y="679.40" width="4.0" height="16.60" fill="#ffffff"/>
<rect x="1488.26" y="674.20" width="4.0" height="21.80" fill="#ffffff"/>
<rect x="1499.27" y="669.80" width="4.0" height="26.20" fill="#ffffff"/>
<rect x="1510.28" y="667.20" width="4.0" height="28.80" fill="#ffffff"/>
<rect x="1521.29" y="674.20" width="4.0" height="21.80" fill="#ffffff"/>
<rect x="1532.30" y="676.80" width="4.0" height="19.20" fill="#ffffff"/>
<rect x="1543.30" y="677.10" width="4.0" height="18.90" fill="#ffffff"/>
<rect x="1554.31" y="681.20" width="4.0" height="14.80" fill="#ffffff"/>
<rect x="1565.32" y="683.30" width="4.0" height="12.70" fill="#ffffff"/>
<rect x="1576.33" y="684.10" width="4.0" height="11.90" fill="#ffffff"/>
<rect x="1587.34" y="685.90" width="4.0" height="10.10" fill="#ffffff"/>
<rect x="1598.34" y="684.90" width="4.0" height="11.10" fill="#ffffff"/>
<rect x="1609.35" y="684.90" width="4.0" height="11.10" fill="#ffffff"/>
<rect x="1620.36" y="681.50" width="4.0" height="14.50" fill="#ffffff"/>
<rect x="1631.37" y="677.10" width="4.0" height="18.90" fill="#ffffff"/>
<rect x="1642.38" y="674.50" width="4.0" height="21.50" fill="#ffffff"/>
<rect x="1653.38" y="674.50" width="4.0" height="21.50" fill="#ffffff"/>
<rect x="1664.39" y="676.30" width="4.0" height="19.70" fill="#ffffff"/>
<rect x="1675.40" y="678.90" width="4.0" height="17.10" fill="#ffffff"/>
<rect x="1686.41" y="682.50" width="4.0" height="13.50" fill="#ffffff"/>
<rect x="1697.41" y="683.30" width="4.0" height="12.70" fill="#ffffff"/>
<rect x="1708.42" y="684.10" width="4.0" height="11.90" fill="#ffffff"/>
<rect x="1719.43" y="684.10" width="4.0" height="11.90" fill="#ffffff"/>
<rect x="1730.44" y="681.50" width="4.0" height="14.50" fill="#ffffff"/>
<rect x="1741.45" y="678.90" width="4.0" height="17.10" fill="#ffffff"/>
<rect x="1752.45" y="672.40" width="4.0" height="23.60" fill="#ffffff"/>
<rect x="1763.46" y="669.80" width="4.0" height="26.20" fill="#ffffff"/>
<rect x="1774.47" y="670.50" width="4.0" height="25.50" fill="#ffffff"/>
<rect x="1785.48" y="674.50" width="4.0" height="21.50" fill="#ffffff"/>
<rect x="1796.49" y="678.10" width="4.0" height="17.90" fill="#ffffff"/>
<rect x="1807.49" y="680.70" width="4.0" height="15.30" fill="#ffffff"/>
<rect x="1818.50" y="681.50" width="4.0" height="14.50" fill="#ffffff"/>
<rect x="1829.51" y="684.90" width="4.0" height="11.10" fill="#ffffff"/>
<rect x="1841.52" y="693.5" width="2" height="2.5" fill="#bbbbbb"/>
<rect x="1852.53" y="693.5" width="2" height="2.5" fill="#bbbbbb"/>
<rect x="1863.53" y="693.5" width="2" height="2.5" fill="#bbbbbb"/>
<line x1="79.5" y1="694.5" x2="1866" y2="694.5" stroke="#8a8a8a" stroke-opacity="0.8"/>
<text transform="translate(42,568.1) rotate(-90)" text-anchor="middle" class="yt" letter-spacing="0.25">Weekly Deaths</text>
<line x1="72.5" y1="974.5" x2="78" y2="974.5" stroke="#666"/>
<text x="67" y="979.5" text-anchor="end" class="yl">0</text>
<line x1="78" y1="935.5" x2="1866" y2="935.5" stroke="#404040" stroke-dasharray="3 2.3"/>
<line x1="72.5" y1="935.5" x2="78" y2="935.5" stroke="#666"/>
<text x="67" y="940.5" text-anchor="end" class="yl">1M</text>
<line x1="78" y1="896.5" x2="1866" y2="896.5" stroke="#404040" stroke-dasharray="3 2.3"/>
<line x1="72.5" y1="896.5" x2="78" y2="896.5" stroke="#666"/>
<text x="67" y="901.5" text-anchor="end" class="yl">2M</text>
<line x1="78" y1="857.6" x2="1866" y2="857.6" stroke="#404040" stroke-dasharray="3 2.3"/>
<line x1="72.5" y1="857.6" x2="78" y2="857.6" stroke="#666"/>
<text x="67" y="862.6" text-anchor="end" class="yl">3M</text>
<line x1="78" y1="818.6" x2="1866" y2="818.6" stroke="#404040" stroke-dasharray="3 2.3"/>
<line x1="72.5" y1="818.6" x2="78" y2="818.6" stroke="#666"/>
<text x="67" y="823.6" text-anchor="end" class="yl">4M</text>
<line x1="78" y1="779.6" x2="1866" y2="779.6" stroke="#404040" stroke-dasharray="3 2.3"/>
<line x1="72.5" y1="779.6" x2="78" y2="779.6" stroke="#666"/>
<text x="67" y="784.6" text-anchor="end" class="yl">5M</text>
<line x1="78" y1="740.6" x2="1866" y2="740.6" stroke="#404040" stroke-dasharray="3 2.3"/>
<line x1="72.5" y1="740.6" x2="78" y2="740.6" stroke="#666"/>
<text x="67" y="745.6" text-anchor="end" class="yl">6M</text>
<line x1="133.5" y1="740.6" x2="133.5" y2="974.5" stroke="#3c3c3c" stroke-dasharray="3 2.3"/>
<line x1="133.5" y1="974.5" x2="133.5" y2="979.0" stroke="#8a8a8a"/>
<text x="135.7" y="991.1" class="xl">Mar</text>
<line x1="229.5" y1="740.6" x2="229.5" y2="974.5" stroke="#3c3c3c" stroke-dasharray="3 2.3"/>
<line x1="229.5" y1="974.5" x2="229.5" y2="979.0" stroke="#8a8a8a"/>
<text x="231.7" y="991.1" class="xl">May</text>
<line x1="325.5" y1="740.6" x2="325.5" y2="974.5" stroke="#3c3c3c" stroke-dasharray="3 2.3"/>
<line x1="325.5" y1="974.5" x2="325.5" y2="979.0" stroke="#8a8a8a"/>
<text x="327.8" y="991.1" class="xl">Jul</text>
<line x1="422.5" y1="740.6" x2="422.5" y2="974.5" stroke="#3c3c3c" stroke-dasharray="3 2.3"/>
<line x1="422.5" y1="974.5" x2="422.5" y2="979.0" stroke="#8a8a8a"/>
<text x="425.4" y="991.1" class="xl">Sep</text>
<line x1="518.5" y1="740.6" x2="518.5" y2="974.5" stroke="#3c3c3c" stroke-dasharray="3 2.3"/>
<line x1="518.5" y1="974.5" x2="518.5" y2="979.0" stroke="#8a8a8a"/>
<text x="521.5" y="991.1" class="xl">Nov</text>
<line x1="615.5" y1="740.6" x2="615.5" y2="974.5" stroke="#3c3c3c" stroke-dasharray="3 2.3"/>
<line x1="615.5" y1="974.5" x2="615.5" y2="979.0" stroke="#8a8a8a"/>
<text x="617.5" y="991.1" class="xl b">2021</text>
<line x1="707.5" y1="740.6" x2="707.5" y2="974.5" stroke="#3c3c3c" stroke-dasharray="3 2.3"/>
<line x1="707.5" y1="974.5" x2="707.5" y2="979.0" stroke="#8a8a8a"/>
<text x="710.4" y="991.1" class="xl">Mar</text>
<line x1="803.5" y1="740.6" x2="803.5" y2="974.5" stroke="#3c3c3c" stroke-dasharray="3 2.3"/>
<line x1="803.5" y1="974.5" x2="803.5" y2="979.0" stroke="#8a8a8a"/>
<text x="806.5" y="991.1" class="xl">May</text>
<line x1="900.5" y1="740.6" x2="900.5" y2="974.5" stroke="#3c3c3c" stroke-dasharray="3 2.3"/>
<line x1="900.5" y1="974.5" x2="900.5" y2="979.0" stroke="#8a8a8a"/>
<text x="902.5" y="991.1" class="xl">Jul</text>
<line x1="997.5" y1="740.6" x2="997.5" y2="974.5" stroke="#3c3c3c" stroke-dasharray="3 2.3"/>
<line x1="997.5" y1="974.5" x2="997.5" y2="979.0" stroke="#8a8a8a"/>
<text x="1000.2" y="991.1" class="xl">Sep</text>
<line x1="1093.5" y1="740.6" x2="1093.5" y2="974.5" stroke="#3c3c3c" stroke-dasharray="3 2.3"/>
<line x1="1093.5" y1="974.5" x2="1093.5" y2="979.0" stroke="#8a8a8a"/>
<text x="1096.2" y="991.1" class="xl">Nov</text>
<line x1="1189.5" y1="740.6" x2="1189.5" y2="974.5" stroke="#3c3c3c" stroke-dasharray="3 2.3"/>
<line x1="1189.5" y1="974.5" x2="1189.5" y2="979.0" stroke="#8a8a8a"/>
<text x="1192.3" y="991.1" class="xl b">2022</text>
<line x1="1282.5" y1="740.6" x2="1282.5" y2="974.5" stroke="#3c3c3c" stroke-dasharray="3 2.3"/>
<line x1="1282.5" y1="974.5" x2="1282.5" y2="979.0" stroke="#8a8a8a"/>
<text x="1285.2" y="991.1" class="xl">Mar</text>
<line x1="1378.5" y1="740.6" x2="1378.5" y2="974.5" stroke="#3c3c3c" stroke-dasharray="3 2.3"/>
<line x1="1378.5" y1="974.5" x2="1378.5" y2="979.0" stroke="#8a8a8a"/>
<text x="1381.2" y="991.1" class="xl">May</text>
<line x1="1474.5" y1="740.6" x2="1474.5" y2="974.5" stroke="#3c3c3c" stroke-dasharray="3 2.3"/>
<line x1="1474.5" y1="974.5" x2="1474.5" y2="979.0" stroke="#8a8a8a"/>
<text x="1477.3" y="991.1" class="xl">Jul</text>
<line x1="1572.5" y1="740.6" x2="1572.5" y2="974.5" stroke="#3c3c3c" stroke-dasharray="3 2.3"/>
<line x1="1572.5" y1="974.5" x2="1572.5" y2="979.0" stroke="#8a8a8a"/>
<text x="1574.9" y="991.1" class="xl">Sep</text>
<line x1="1668.5" y1="740.6" x2="1668.5" y2="974.5" stroke="#3c3c3c" stroke-dasharray="3 2.3"/>
<line x1="1668.5" y1="974.5" x2="1668.5" y2="979.0" stroke="#8a8a8a"/>
<text x="1671.0" y="991.1" class="xl">Nov</text>
<line x1="1764.5" y1="740.6" x2="1764.5" y2="974.5" stroke="#3c3c3c" stroke-dasharray="3 2.3"/>
<line x1="1764.5" y1="974.5" x2="1764.5" y2="979.0" stroke="#8a8a8a"/>
<text x="1767.0" y="991.1" class="xl b">2023</text>
<line x1="1857.5" y1="740.6" x2="1857.5" y2="974.5" stroke="#3c3c3c" stroke-dasharray="3 2.3"/>
<line x1="1857.5" y1="974.5" x2="1857.5" y2="979.0" stroke="#8a8a8a"/>
<text x="1859.9" y="991.1" class="xl">Mar</text>
<line x1="78" y1="740.1" x2="78" y2="974.5" stroke="#555" stroke-width="1.5"/>
<rect x="77.67" y="973.5" width="2" height="2.5" fill="#44702a"/>
<rect x="88.69" y="973.5" width="2" height="2.5" fill="#44702a"/>
<rect x="99.71" y="973.5" width="2" height="2.5" fill="#44702a"/>
<rect x="110.73" y="973.5" width="2" height="2.5" fill="#44702a"/>
<rect x="121.76" y="973.5" width="2" height="2.5" fill="#44702a"/>
<rect x="132.78" y="973.5" width="2" height="2.5" fill="#44702a"/>
<rect x="143.80" y="973.5" width="2" height="2.5" fill="#44702a"/>
<rect x="154.83" y="973.5" width="2" height="2.5" fill="#44702a"/>
<rect x="165.85" y="973.5" width="2" height="2.5" fill="#44702a"/>
<rect x="176.87" y="973.5" width="2" height="2.5" fill="#44702a"/>
<rect x="187.89" y="973.5" width="2" height="2.5" fill="#44702a"/>
<rect x="198.92" y="973.5" width="2" height="2.5" fill="#44702a"/>
<rect x="209.94" y="973.5" width="2" height="2.5" fill="#44702a"/>
<rect x="220.96" y="973.5" width="2" height="2.5" fill="#44702a"/>
<rect x="231.98" y="973.5" width="2" height="2.5" fill="#44702a"/>
<rect x="243.01" y="973.5" width="2" height="2.5" fill="#44702a"/>
<rect x="254.03" y="973.5" width="2" height="2.5" fill="#44702a"/>
<rect x="265.05" y="973.5" width="2" height="2.5" fill="#44702a"/>
<rect x="276.07" y="973.5" width="2" height="2.5" fill="#44702a"/>
<rect x="287.10" y="973.5" width="2" height="2.5" fill="#44702a"/>
<rect x="298.12" y="973.5" width="2" height="2.5" fill="#44702a"/>
<rect x="309.14" y="973.5" width="2" height="2.5" fill="#44702a"/>
<rect x="320.16" y="973.5" width="2" height="2.5" fill="#44702a"/>
<rect x="331.19" y="973.5" width="2" height="2.5" fill="#44702a"/>
<rect x="342.21" y="973.5" width="2" height="2.5" fill="#44702a"/>
<rect x="353.23" y="973.5" width="2" height="2.5" fill="#44702a"/>
<rect x="364.25" y="973.5" width="2" height="2.5" fill="#44702a"/>
<rect x="375.28" y="973.5" width="2" height="2.5" fill="#44702a"/>
<rect x="386.30" y="973.5" width="2" height="2.5" fill="#44702a"/>
<rect x="397.32" y="973.5" width="2" height="2.5" fill="#44702a"/>
<rect x="408.34" y="973.5" width="2" height="2.5" fill="#44702a"/>
<rect x="419.37" y="973.5" width="2" height="2.5" fill="#44702a"/>
<rect x="430.39" y="973.5" width="2" height="2.5" fill="#44702a"/>
<rect x="441.41" y="973.5" width="2" height="2.5" fill="#44702a"/>
<rect x="452.43" y="973.5" width="2" height="2.5" fill="#44702a"/>
<rect x="463.46" y="973.5" width="2" height="2.5" fill="#44702a"/>
<rect x="474.48" y="973.5" width="2" height="2.5" fill="#44702a"/>
<rect x="485.50" y="973.5" width="2" height="2.5" fill="#44702a"/>
<rect x="496.52" y="973.5" width="2" height="2.5" fill="#44702a"/>
<rect x="507.55" y="973.5" width="2" height="2.5" fill="#44702a"/>
<rect x="518.57" y="973.5" width="2" height="2.5" fill="#44702a"/>
<rect x="529.59" y="973.5" width="2" height="2.5" fill="#44702a"/>
<rect x="540.61" y="973.5" width="2" height="2.5" fill="#44702a"/>
<rect x="551.64" y="973.5" width="2" height="2.5" fill="#44702a"/>
<rect x="562.66" y="973.5" width="2" height="2.5" fill="#44702a"/>
<rect x="573.68" y="973.5" width="2" height="2.5" fill="#44702a"/>
<rect x="584.70" y="973.5" width="2" height="2.5" fill="#44702a"/>
<rect x="595.73" y="973.5" width="2" height="2.5" fill="#44702a"/>
<rect x="606.75" y="973.5" width="2" height="2.5" fill="#44702a"/>
<rect x="617.77" y="973.5" width="2" height="2.5" fill="#44702a"/>
<rect x="628.79" y="973.5" width="2" height="2.5" fill="#44702a"/>
<rect x="638.82" y="805.00" width="4.0" height="171.00" fill="#4caa0f"/>
<rect x="649.84" y="876.25" width="4.0" height="99.75" fill="#4caa0f"/>
<rect x="660.86" y="869.50" width="4.0" height="106.50" fill="#4caa0f"/>
<rect x="671.88" y="853.25" width="4.0" height="122.75" fill="#4caa0f"/>
<rect x="682.91" y="853.25" width="4.0" height="122.75" fill="#4caa0f"/>
<rect x="693.93" y="871.50" width="4.0" height="104.50" fill="#4caa0f"/>
<rect x="704.95" y="869.00" width="4.0" height="107.00" fill="#4caa0f"/>
<rect x="715.98" y="878.00" width="4.0" height="98.00" fill="#4caa0f"/>
<rect x="727.00" y="878.00" width="4.0" height="98.00" fill="#4caa0f"/>
<rect x="738.02" y="814.00" width="4.0" height="162.00" fill="#4caa0f"/>
<rect x="749.04" y="823.75" width="4.0" height="152.25" fill="#4caa0f"/>
<rect x="760.07" y="847.00" width="4.0" height="129.00" fill="#4caa0f"/>
<rect x="771.09" y="868.75" width="4.0" height="107.25" fill="#4caa0f"/>
<rect x="782.11" y="849.25" width="4.0" height="126.75" fill="#4caa0f"/>
<rect x="793.13" y="835.75" width="4.0" height="140.25" fill="#4caa0f"/>
<rect x="804.16" y="835.50" width="4.0" height="140.50" fill="#4caa0f"/>
<rect x="815.18" y="848.00" width="4.0" height="128.00" fill="#4caa0f"/>
<rect x="826.20" y="831.00" width="4.0" height="145.00" fill="#4caa0f"/>
<rect x="837.22" y="821.25" width="4.0" height="154.75" fill="#4caa0f"/>
<rect x="848.25" y="816.50" width="4.0" height="159.50" fill="#4caa0f"/>
<rect x="859.27" y="841.00" width="4.0" height="135.00" fill="#4caa0f"/>
<rect x="870.29" y="842.75" width="4.0" height="133.25" fill="#4caa0f"/>
<rect x="881.31" y="858.25" width="4.0" height="117.75" fill="#4caa0f"/>
<rect x="892.34" y="877.00" width="4.0" height="99.00" fill="#4caa0f"/>
<rect x="903.36" y="890.50" width="4.0" height="85.50" fill="#4caa0f"/>
<rect x="914.38" y="905.00" width="4.0" height="71.00" fill="#4caa0f"/>
<rect x="925.40" y="910.00" width="4.0" height="66.00" fill="#4caa0f"/>
<rect x="936.43" y="915.75" width="4.0" height="60.25" fill="#4caa0f"/>
<rect x="947.45" y="918.00" width="4.0" height="58.00" fill="#4caa0f"/>
<rect x="958.47" y="921.25" width="4.0" height="54.75" fill="#4caa0f"/>
<rect x="969.49" y="918.00" width="4.0" height="58.00" fill="#4caa0f"/>
<rect x="980.52" y="916.50" width="4.0" height="59.50" fill="#4caa0f"/>
<rect x="991.54" y="922.75" width="4.0" height="53.25" fill="#4caa0f"/>
<rect x="1002.56" y="934.50" width="4.0" height="41.50" fill="#4caa0f"/>
<rect x="1013.58" y="942.75" width="4.0" height="33.25" fill="#4caa0f"/>
<rect x="1024.61" y="950.50" width="4.0" height="25.50" fill="#4caa0f"/>
<rect x="1035.63" y="955.00" width="4.0" height="21.00" fill="#4caa0f"/>
<rect x="1046.65" y="908.25" width="4.0" height="67.75" fill="#4caa0f"/>
<rect x="1057.67" y="912.00" width="4.0" height="64.00" fill="#4caa0f"/>
<rect x="1068.70" y="894.00" width="4.0" height="82.00" fill="#4caa0f"/>
<rect x="1079.72" y="874.25" width="4.0" height="101.75" fill="#4caa0f"/>
<rect x="1090.74" y="881.25" width="4.0" height="94.75" fill="#4caa0f"/>
<rect x="1101.76" y="873.25" width="4.0" height="102.75" fill="#4caa0f"/>
<rect x="1112.79" y="854.25" width="4.0" height="121.75" fill="#4caa0f"/>
<rect x="1123.81" y="864.25" width="4.0" height="111.75" fill="#4caa0f"/>
<rect x="1134.83" y="862.50" width="4.0" height="113.50" fill="#4caa0f"/>
<rect x="1145.85" y="853.50" width="4.0" height="122.50" fill="#4caa0f"/>
<rect x="1156.88" y="846.25" width="4.0" height="129.75" fill="#4caa0f"/>
<rect x="1167.90" y="761.00" width="4.0" height="215.00" fill="#4caa0f"/>
<rect x="1178.92" y="786.25" width="4.0" height="189.75" fill="#4caa0f"/>
<rect x="1189.94" y="898.00" width="4.0" height="78.00" fill="#4caa0f"/>
<rect x="1200.97" y="902.00" width="4.0" height="74.00" fill="#4caa0f"/>
<rect x="1211.99" y="923.75" width="4.0" height="52.25" fill="#4caa0f"/>
<rect x="1223.01" y="940.00" width="4.0" height="36.00" fill="#4caa0f"/>
<rect x="1234.04" y="945.00" width="4.0" height="31.00" fill="#4caa0f"/>
<rect x="1245.06" y="951.75" width="4.0" height="24.25" fill="#4caa0f"/>
<rect x="1256.08" y="954.25" width="4.0" height="21.75" fill="#4caa0f"/>
<rect x="1267.10" y="956.25" width="4.0" height="19.75" fill="#4caa0f"/>
<rect x="1278.13" y="958.75" width="4.0" height="17.25" fill="#4caa0f"/>
<rect x="1289.15" y="960.75" width="4.0" height="15.25" fill="#4caa0f"/>
<rect x="1300.17" y="953.25" width="4.0" height="22.75" fill="#4caa0f"/>
<rect x="1311.19" y="962.50" width="4.0" height="13.50" fill="#4caa0f"/>
<rect x="1322.22" y="942.50" width="4.0" height="33.50" fill="#4caa0f"/>
<rect x="1333.24" y="942.50" width="4.0" height="33.50" fill="#4caa0f"/>
<rect x="1344.26" y="936.50" width="4.0" height="39.50" fill="#4caa0f"/>
<rect x="1355.28" y="940.00" width="4.0" height="36.00" fill="#4caa0f"/>
<rect x="1366.31" y="935.50" width="4.0" height="40.50" fill="#4caa0f"/>
<rect x="1377.33" y="937.00" width="4.0" height="39.00" fill="#4caa0f"/>
<rect x="1388.35" y="948.00" width="4.0" height="28.00" fill="#4caa0f"/>
<rect x="1399.37" y="949.00" width="4.0" height="27.00" fill="#4caa0f"/>
<rect x="1410.40" y="953.25" width="4.0" height="22.75" fill="#4caa0f"/>
<rect x="1421.42" y="957.00" width="4.0" height="19.00" fill="#4caa0f"/>
<rect x="1432.44" y="963.00" width="4.0" height="13.00" fill="#4caa0f"/>
<rect x="1443.46" y="961.50" width="4.0" height="14.50" fill="#4caa0f"/>
<rect x="1454.49" y="963.00" width="4.0" height="13.00" fill="#4caa0f"/>
<rect x="1465.51" y="960.75" width="4.0" height="15.25" fill="#4caa0f"/>
<rect x="1476.53" y="960.75" width="4.0" height="15.25" fill="#4caa0f"/>
<rect x="1487.55" y="963.00" width="4.0" height="13.00" fill="#4caa0f"/>
<rect x="1498.58" y="965.00" width="4.0" height="11.00" fill="#4caa0f"/>
<rect x="1509.60" y="966.10" width="4.0" height="9.90" fill="#4caa0f"/>
<rect x="1520.62" y="966.10" width="4.0" height="9.90" fill="#4caa0f"/>
<rect x="1531.64" y="967.10" width="4.0" height="8.90" fill="#4caa0f"/>
<rect x="1542.67" y="969.30" width="4.0" height="6.70" fill="#4caa0f"/>
<rect x="1553.69" y="969.30" width="4.0" height="6.70" fill="#4caa0f"/>
<rect x="1564.71" y="970.10" width="4.0" height="5.90" fill="#4caa0f"/>
<rect x="1575.73" y="970.75" width="4.0" height="5.25" fill="#4caa0f"/>
<rect x="1587.76" y="973.5" width="2" height="2.5" fill="#44702a"/>
<rect x="1598.78" y="973.5" width="2" height="2.5" fill="#44702a"/>
<rect x="1609.80" y="973.5" width="2" height="2.5" fill="#44702a"/>
<rect x="1620.82" y="973.5" width="2" height="2.5" fill="#44702a"/>
<rect x="1631.85" y="973.5" width="2" height="2.5" fill="#44702a"/>
<rect x="1642.87" y="973.5" width="2" height="2.5" fill="#44702a"/>
<rect x="1653.89" y="973.5" width="2" height="2.5" fill="#44702a"/>
<rect x="1664.91" y="973.5" width="2" height="2.5" fill="#44702a"/>
<rect x="1675.94" y="973.5" width="2" height="2.5" fill="#44702a"/>
<rect x="1686.96" y="973.5" width="2" height="2.5" fill="#44702a"/>
<rect x="1697.98" y="973.5" width="2" height="2.5" fill="#44702a"/>
<rect x="1709.00" y="973.5" width="2" height="2.5" fill="#44702a"/>
<rect x="1720.03" y="973.5" width="2" height="2.5" fill="#44702a"/>
<rect x="1731.05" y="973.5" width="2" height="2.5" fill="#44702a"/>
<rect x="1742.07" y="973.5" width="2" height="2.5" fill="#44702a"/>
<rect x="1753.09" y="973.5" width="2" height="2.5" fill="#44702a"/>
<rect x="1764.12" y="973.5" width="2" height="2.5" fill="#44702a"/>
<rect x="1775.14" y="973.5" width="2" height="2.5" fill="#44702a"/>
<rect x="1786.16" y="973.5" width="2" height="2.5" fill="#44702a"/>
<rect x="1797.19" y="973.5" width="2" height="2.5" fill="#44702a"/>
<rect x="1808.21" y="973.5" width="2" height="2.5" fill="#44702a"/>
<rect x="1819.23" y="973.5" width="2" height="2.5" fill="#44702a"/>
<rect x="1830.25" y="973.5" width="2" height="2.5" fill="#44702a"/>
<rect x="1841.28" y="973.5" width="2" height="2.5" fill="#44702a"/>
<rect x="1852.30" y="973.5" width="2" height="2.5" fill="#44702a"/>
<rect x="1863.32" y="973.5" width="2" height="2.5" fill="#44702a"/>
<line x1="77" y1="974.5" x2="1866" y2="974.5" stroke="#8a8a8a" stroke-opacity="0.8"/>
<text transform="translate(42,857.55) rotate(-90)" text-anchor="middle" class="yt" letter-spacing="0.22">Weekly Doses Administered</text>
<circle cx="1894" cy="146.8" r="7.3" fill="none" stroke="#8a8a8a" stroke-width="1"/>
<g stroke="#8a8a8a" stroke-width="0.8">
<path d="M1891 143.2 l2.2 2.2 M1893.2 143.6 v1.8 h-1.8 M1897 143.2 l-2.2 2.2 M1894.8 143.6 v1.8 h1.8 M1891 150.4 l2.2 -2.2 M1893.2 150 v-1.8 h-1.8 M1897 150.4 l-2.2 -2.2 M1894.8 150 v-1.8 h1.8" fill="none"/>
</g>
</svg>

<!-- tabs -->
<div class="a" style="left:23px;top:1002px;width:71px;height:30px;background:#2d2d2d;border-left:1px solid #3c3c3c;border-right:1px solid #3c3c3c"></div>
<div class="a" style="left:22px;top:1030px;width:72px;height:2px;background:#3a92cc"></div>
<div class="a" style="left:37px;top:1011.5px;font-size:12.5px;color:#f0f0f0">Weekly</div>
<div class="a" style="left:101px;top:1002px;width:72px;height:30px;background:#363636;border:1px solid #424242"></div>
<div class="a" style="left:117px;top:1011.5px;font-size:12.5px;color:#f0f0f0">28-Day</div>
<div class="a" style="left:157.5px;top:1010px;width:1px;height:15px;background:#fff"></div>

<div id="sb"></div>
<div id="thumb"></div>
<svg class="a" style="left:1903px;top:0" width="17" height="1080"><polygon points="4.8,10.8 8.5,7.1 12.2,10.8" fill="#505050"/><polygon points="4.8,1069.2 8.5,1072.9 12.2,1069.2" fill="#505050"/></svg>
<!-- tooltip -->
<div class="a" style="left:1859px;top:161px;width:61px;height:25px;background:#fff;border:1px solid #262626"></div>
<div class="a" style="left:1867px;top:167.5px;font-size:11.5px;color:#3c3c3c;letter-spacing:-0.1px">Collapse</div>

</body></html>
